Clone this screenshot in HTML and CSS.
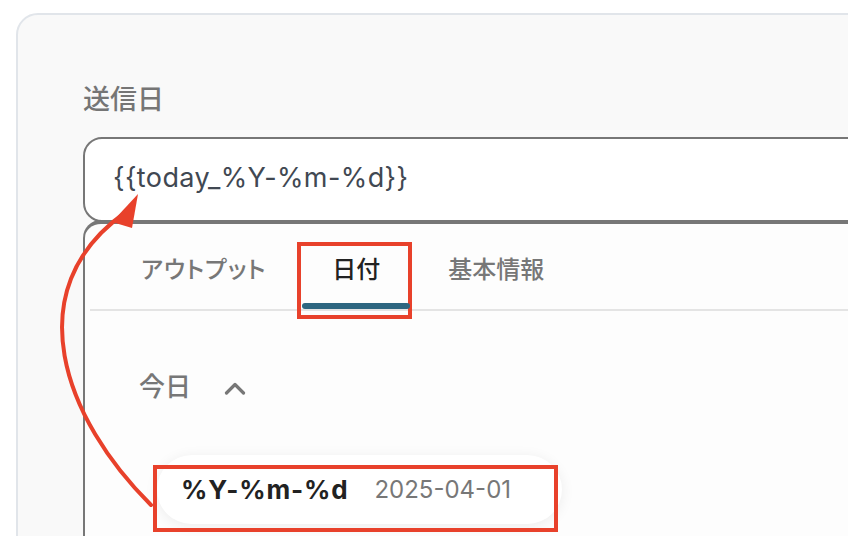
FILE: index.html
```html
<!DOCTYPE html>
<html lang="ja">
<head>
<meta charset="utf-8">
<link rel="stylesheet" href="styles.css">
</head>
<body>
<div class="card">
  <div class="label">送信日</div>
  <div class="input">{{today_%Y-%m-%d}}</div>
  <div class="panel">
    <div class="tabs">
      <div class="tab tab-kana">アウトプット</div>
      <div class="tab active">日付<span class="mark mark-tab"></span></div>
      <div class="tab">基本情報</div>
    </div>
    <div class="divider"></div>
    <div class="group">
      <span class="group-title">今日</span>
      <svg class="chev" width="22" height="14" viewBox="0 0 22 14"><path d="M2.5 12 L11 3.5 L19.5 12" fill="none" stroke="#777" stroke-width="3.2" stroke-linecap="round" stroke-linejoin="round"/></svg>
    </div>
    <div class="item">
      <span class="item-key">%Y-%m-%d</span>
      <span class="item-val">2025-04-01</span>
      <span class="mark mark-item"></span>
    </div>
  </div>
</div>
<svg class="arrow" width="848" height="536" viewBox="0 0 848 536">
  <path d="M151 505 C 65 420, 15 290, 126 212" fill="none" stroke="#e8412b" stroke-width="4" stroke-linecap="round"/>
  <path d="M138 194 L112 222 L132 228 Z" fill="#e8412b"/>
</svg>
</body>
</html>
```
FILE: styles.css
```css
html, body {
  margin: 0;
  padding: 0;
  background: #ffffff;
  overflow: hidden;
  width: 848px;
  height: 536px;
}
body {
  position: relative;
  font-family: "Inter", "Noto Sans CJK JP", sans-serif;
}
.card {
  margin: 13px 0 0 16px;
  width: 1000px;
  height: 700px;
  box-sizing: border-box;
  border: 2px solid #e1e5ea;
  border-radius: 22px;
  background: #f9f9f9;
  padding: 65px 0 0 65px;
}
.label {
  font-size: 27px;
  line-height: 36px;
  font-weight: 500;
  color: #757575;
  height: 36px;
  margin-bottom: 21px;
  font-family: "Noto Sans CJK JP", sans-serif;
}
.input {
  height: 85px;
  box-sizing: border-box;
  border: 2px solid #777;
  border-radius: 19px;
  background: #fff;
  padding: 0 0 0 28px;
  font-size: 27px;
  line-height: 77px;
  color: #414852;
  letter-spacing: 0.4px;
}
.panel {
  margin-top: -2px;
  height: 400px;
  border-top: 4px solid #777;
  border-left: 2px solid #777;
  border-top-left-radius: 18px;
  background: #fdfdfd;
}
.tabs {
  display: flex;
  gap: 8px;
  padding-left: 26px;
  height: 85px;
}
.tab {
  position: relative;
  padding: 0 30px;
  font-family: "Noto Sans CJK JP", sans-serif;
  font-size: 24px;
  font-weight: 500;
  color: #777;
  line-height: 88px;
}
.tab-kana {
  font-size: 23.5px;
  font-feature-settings: "palt";
  letter-spacing: 1px;
  padding-right: 28px;
}
.tab.active {
  color: #222;
}
.tab.active::after {
  content: "";
  position: absolute;
  left: 0;
  right: 0;
  bottom: 0;
  height: 6px;
  border-radius: 3px;
  background: #2d6680;
}
.mark {
  position: absolute;
  border: 4px solid #e8412b;
  box-sizing: border-box;
  pointer-events: none;
}
.mark-tab {
  left: -5px;
  right: -2px;
  top: 18px;
  bottom: -10px;
}
.divider {
  height: 2px;
  background: #e4e4e4;
  margin-left: 5px;
}
.group {
  display: flex;
  align-items: center;
  gap: 33px;
  padding-left: 54px;
  margin-top: 56px;
  height: 36px;
}
.group-title {
  font-family: "Noto Sans CJK JP", sans-serif;
  font-size: 26px;
  font-weight: 500;
  color: #777;
  line-height: 36px;
}
.chev {
  display: block;
  margin-top: 6px;
}
.item {
  position: relative;
  display: flex;
  align-items: center;
  gap: 26px;
  margin: 52px 0 0 72px;
  width: 405px;
  height: 69px;
  box-sizing: border-box;
  padding-left: 24px;
  border-radius: 35px;
  background: #fff;
  box-shadow: 0 2px 14px rgba(0,0,0,0.07);
}
.item-key {
  font-size: 26px;
  font-weight: 700;
  color: #222;
  letter-spacing: 0.8px;
}
.item-val {
  font-size: 24px;
  color: #777;
}
.mark-item {
  left: -4px;
  top: 10px;
  width: 405px;
  height: 67px;
}
.arrow {
  position: absolute;
  left: 0;
  top: 0;
  pointer-events: none;
}
```
